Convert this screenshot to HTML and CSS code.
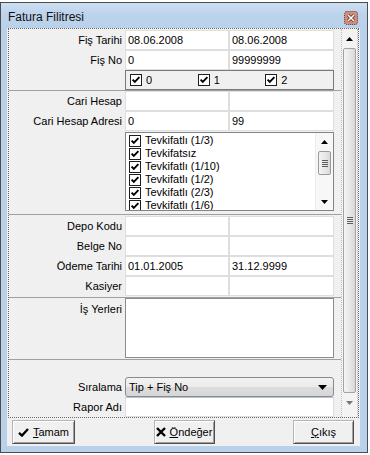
FILE: index.html
```html
<!DOCTYPE html>
<html lang="tr">
<head>
  <meta charset="UTF-8" />
  <title>Fatura Filitresi</title>
  <link rel="stylesheet" href="styles.css">
</head>
<body>

  <!-- shared checkbox glyph -->
  <svg width="0" height="0" class="defs">
    <symbol id="chk" viewBox="0 0 12 12">
      <rect x="0.5" y="0.5" width="11" height="11" fill="#fff" stroke="#1e1e1e"/>
      <path d="M2.6 5.6 L4.8 7.9 L9.4 3.2" fill="none" stroke="#000" stroke-width="1.9"/>
    </symbol>
  </svg>

  <div class="window">
    <!-- Title bar -->
    <div class="titlebar">
      <span class="title">Fatura Filitresi</span>
      <svg class="close-btn" width="14" height="14" viewBox="0 0 14 14">
        <rect x="0.5" y="0.5" width="13" height="13" rx="2" fill="#d08c79" stroke="#6e3b30" stroke-dasharray="1 1"/>
        <path d="M4 4 L10 10 M10 4 L4 10" stroke="#4a2a22" stroke-width="3"/>
        <path d="M4 4 L10 10 M10 4 L4 10" stroke="#fff" stroke-width="1.6"/>
      </svg>
    </div>

    <div class="client">
      <div class="panel">
        <div class="form">

          <div class="section sec-a">
            <div class="row">
              <span class="lbl">Fiş Tarihi</span>
              <span class="field">08.06.2008</span>
              <span class="field">08.06.2008</span>
            </div>
            <div class="row">
              <span class="lbl">Fiş No</span>
              <span class="field">0</span>
              <span class="field">99999999</span>
            </div>
            <div class="row">
              <span class="lbl"></span>
              <div class="checkgroup">
                <span class="chk-item"><svg class="cb"><use href="#chk"/></svg>0</span>
                <span class="chk-item"><svg class="cb"><use href="#chk"/></svg>1</span>
                <span class="chk-item"><svg class="cb"><use href="#chk"/></svg>2</span>
              </div>
            </div>
          </div>

          <div class="section sec-b">
            <div class="row">
              <span class="lbl">Cari Hesap</span>
              <span class="field"></span>
              <span class="field"></span>
            </div>
            <div class="row">
              <span class="lbl">Cari Hesap Adresi</span>
              <span class="field">0</span>
              <span class="field">99</span>
            </div>
            <div class="row list-row">
              <span class="lbl"></span>
              <div class="listbox">
                <ul class="list-items">
                  <li><svg class="cb"><use href="#chk"/></svg>Tevkifatlı (1/3)</li>
                  <li><svg class="cb"><use href="#chk"/></svg>Tevkifatsız</li>
                  <li><svg class="cb"><use href="#chk"/></svg>Tevkifatlı (1/10)</li>
                  <li><svg class="cb"><use href="#chk"/></svg>Tevkifatlı (1/2)</li>
                  <li><svg class="cb"><use href="#chk"/></svg>Tevkifatlı (2/3)</li>
                  <li><svg class="cb"><use href="#chk"/></svg>Tevkifatlı (1/6)</li>
                </ul>
                <div class="mini-scroll">
                  <span class="arrow"><svg width="7" height="4"><polygon points="0,4 7,4 3.5,0" fill="#000"/></svg></span>
                  <span class="mini-thumb"><i></i><i></i><i></i><i></i></span>
                  <span class="track"></span>
                  <span class="arrow"><svg width="7" height="4"><polygon points="0,0 7,0 3.5,4" fill="#000"/></svg></span>
                </div>
              </div>
            </div>
          </div>

          <div class="section sec-c">
            <div class="row">
              <span class="lbl">Depo Kodu</span>
              <span class="field"></span>
              <span class="field"></span>
            </div>
            <div class="row">
              <span class="lbl">Belge No</span>
              <span class="field"></span>
              <span class="field"></span>
            </div>
            <div class="row">
              <span class="lbl">Ödeme Tarihi</span>
              <span class="field">01.01.2005</span>
              <span class="field">31.12.9999</span>
            </div>
            <div class="row">
              <span class="lbl">Kasiyer</span>
              <span class="field"></span>
              <span class="field"></span>
            </div>
          </div>

          <div class="section sec-d">
            <div class="row memo-row">
              <span class="lbl top">İş Yerleri</span>
              <div class="memo"></div>
            </div>
          </div>

          <div class="section sec-e">
            <div class="row">
              <span class="lbl">Sıralama</span>
              <div class="combo">
                <span>Tip + Fiş No</span>
                <svg width="9" height="5"><polygon points="0,0 9,0 4.5,5" fill="#000"/></svg>
              </div>
            </div>
            <div class="row">
              <span class="lbl">Rapor Adı</span>
              <span class="field wide"></span>
            </div>
          </div>

        </div>

        <!-- Panel scrollbar -->
        <div class="vscroll">
          <span class="arrow"><svg width="7" height="4"><polygon points="0,4 7,4 3.5,0" fill="#000"/></svg></span>
          <span class="thumb"><i></i><i></i><i></i><i></i></span>
          <span class="arrow"><svg width="7" height="4"><polygon points="0,0 7,0 3.5,4" fill="#777"/></svg></span>
        </div>
      </div>

      <!-- Buttons -->
      <div class="buttons">
        <button class="btn btn-ok">
          <svg width="11" height="9" viewBox="0 0 11 9"><path d="M1 4.8 L4 7.6 L10 1" fill="none" stroke="#000" stroke-width="2.3"/></svg>
          <span><u>T</u>amam</span>
        </button>
        <button class="btn btn-default">
          <svg width="10" height="10" viewBox="0 0 10 10"><path d="M1 1 L9 9 M9 1 L1 9" stroke="#000" stroke-width="2.4"/></svg>
          <span><u>Ö</u>ndeğer</span>
        </button>
        <button class="btn btn-exit"><span><u>Ç</u>ıkış</span></button>
      </div>
    </div>
  </div>

</body>
</html>
```

FILE: styles.css
```css
body {
  margin: 0;
  background: #fff;
  font-family: "Liberation Sans", Arial, sans-serif;
  font-size: 11px;
  color: #000;
}

.defs {
  position: absolute;
}

/* Window frame */
.window {
  width: 368px;
  height: 451px;
  margin-top: 2px;
  box-sizing: border-box;
  border: 1px solid #4d4d4d;
  background: #b9d1ea;
  display: flex;
  flex-direction: column;
}

.titlebar {
  height: 25px;
  flex: none;
  display: flex;
  justify-content: space-between;
  align-items: flex-start;
  padding: 0 9px 0 7px;
  background: linear-gradient(#cddff2, #bcd3ec 45%, #b9d1ea);
}

.title {
  font-size: 12px;
  line-height: 14px;
  padding-top: 7px;
  color: #111;
}

.close-btn {
  margin-top: 8px;
}

.client {
  height: 418px;
  flex: none;
  margin: 0 7px 0 6px;
  background: #f0f0f0;
  display: flex;
  flex-direction: column;
}

/* Scroll panel */
.panel {
  height: 390px;
  margin: 0 1px;
  box-sizing: border-box;
  border: 1px dotted #6a6a6a;
  display: flex;
}

.form {
  width: 332px;
  overflow: hidden;
}

.section {
  border-top: 1px solid #a0a0a0;
}

.sec-a {
  border-top: none;
  padding-top: 1px;
}

.sec-b .list-row {
  height: auto;
  margin: 1px 0 3px;
}

.sec-c {
  padding: 1px 0;
}

.sec-d {
  padding-bottom: 1px;
}

.sec-e {
  padding-top: 17px;
}

.row {
  display: grid;
  grid-template-columns: 116px 104px 105px;
  height: 20px;
}

.lbl {
  text-align: right;
  padding-right: 3px;
  line-height: 20px;
  white-space: nowrap;
}

.lbl.top {
  line-height: 14px;
  padding-top: 4px;
}

.field {
  box-sizing: border-box;
  height: 20px;
  border: 1px solid #dedede;
  background: #fff;
  padding-left: 2px;
  line-height: 18px;
}

.field.wide {
  grid-column: 2 / 4;
  border-top-color: #b7c4d6;
}

/* Checkbox group */
.checkgroup {
  grid-column: 2 / 4;
  box-sizing: border-box;
  height: 20px;
  border: 1px solid #7a7a7a;
  display: flex;
  align-items: center;
  padding-left: 4px;
}

.chk-item {
  width: 68px;
  display: flex;
  align-items: center;
  gap: 4px;
}

.cb {
  width: 12px;
  height: 12px;
  flex: none;
}

/* Tevkifat list */
.listbox {
  grid-column: 2 / 4;
  height: 79px;
  box-sizing: border-box;
  border: 1px solid #7f858d;
  background: #fff;
  display: flex;
}

.list-items {
  flex: 1;
  margin: 0;
  padding: 1px 0 0 3px;
  list-style: none;
  overflow: hidden;
}

.list-items li {
  height: 13px;
  line-height: 13px;
  display: flex;
  align-items: center;
  gap: 4px;
}

.mini-scroll {
  width: 17px;
  display: flex;
  flex-direction: column;
  align-items: center;
  background: #f7f7f7;
  border-left: 1px solid #ececec;
}

.arrow {
  height: 17px;
  flex: none;
  display: flex;
  align-items: center;
  justify-content: center;
}

.mini-thumb {
  width: 13px;
  height: 24px;
  margin-top: 1px;
  box-sizing: border-box;
  border: 1px solid #9a9a9a;
  border-radius: 2px;
  background: linear-gradient(90deg, #f4f4f4, #e6e6e6 60%, #d9d9d9);
  display: flex;
  flex-direction: column;
  justify-content: center;
  align-items: center;
  gap: 1px;
}

.mini-thumb i,
.thumb i {
  display: block;
  width: 6px;
  height: 1px;
  background: #5d5d5d;
}

.track {
  flex: 1;
}

/* Memo */
.memo-row {
  height: 60px;
}

.memo {
  grid-column: 2 / 4;
  box-sizing: border-box;
  border: 1px solid #8c8c8c;
  background: #fff;
}

/* Combo */
.combo {
  grid-column: 2 / 4;
  box-sizing: border-box;
  height: 20px;
  border: 1px solid #8a8a8a;
  border-radius: 3px;
  background: linear-gradient(#f2f2f2, #ebebeb 50%, #dddddd 51%, #d6d6d6);
  display: flex;
  align-items: center;
  justify-content: space-between;
  padding: 0 6px 0 3px;
}

/* Panel scrollbar */
.vscroll {
  width: 17px;
  box-sizing: border-box;
  border-left: 1px dotted #bdbdbd;
  border-right: 1px dotted #bdbdbd;
  background: #f3f3f3;
  display: flex;
  flex-direction: column;
  align-items: center;
}

.vscroll .arrow {
  height: 19px;
}

.thumb {
  width: 13px;
  height: 345px;
  box-sizing: border-box;
  border: 1px solid #a3a3a3;
  border-radius: 2px;
  background: linear-gradient(90deg, #f5f5f5, #e8e8e8 50%, #d8d8d8);
  display: flex;
  flex-direction: column;
  justify-content: center;
  align-items: center;
  gap: 1px;
}

/* Buttons */
.buttons {
  height: 28px;
  display: flex;
  justify-content: space-between;
  align-items: flex-start;
  padding: 2px 6px 0 5px;
}

.btn {
  height: 24px;
  box-sizing: border-box;
  font-family: "Liberation Sans", Arial, sans-serif;
  font-size: 11px;
  color: #000;
  background: #f0f0f0;
  border: 1px solid;
  border-color: #b4b4b4 #4e4e4e #4e4e4e #b4b4b4;
  box-shadow: inset 1px 1px #fff, inset -1px -1px #a0a0a0;
  display: flex;
  align-items: center;
  justify-content: center;
  gap: 4px;
  padding: 0;
}

.btn-ok {
  width: 63px;
}

.btn-default,
.btn-exit {
  width: 61px;
}
```
